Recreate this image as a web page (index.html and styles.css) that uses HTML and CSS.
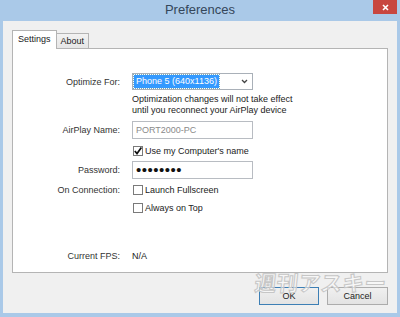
FILE: index.html
```html
<!DOCTYPE html>
<html>
<head>
<meta charset="utf-8">
<link rel="stylesheet" href="styles.css">
</head>
<body>
<div class="window">
  <div class="titlebar">
    <span class="title">Preferences</span>
    <span class="close"><svg width="7" height="7" viewBox="0 0 7 7"><path d="M1 1L6 6M6 1L1 6" stroke="#fff" stroke-width="1.6"/></svg></span>
  </div>
  <div class="client">
    <div class="tabs">
      <div class="tab active">Settings</div>
      <div class="tab">About</div>
    </div>
    <div class="panel">
      <div class="row r1">
        <span class="lbl">Optimize For:</span>
        <div class="select"><span class="sel-text">Phone 5 (640x1136)</span><svg class="chev" width="7" height="5" viewBox="0 0 7 5"><path d="M1 1L3.5 3.5L6 1" fill="none" stroke="#444" stroke-width="1.3"/></svg></div>
      </div>
      <div class="row r2">
        <span class="lbl"></span>
        <p class="help">Optimization changes will not take effect<br>until you reconnect your AirPlay device</p>
      </div>
      <div class="row r3">
        <span class="lbl">AirPlay Name:</span>
        <div class="input"><span class="placeholder">PORT2000-PC</span></div>
      </div>
      <div class="row r4">
        <span class="lbl"></span>
        <span class="check"><span class="box"><svg width="10" height="10" viewBox="0 0 10 10"><path d="M1.8 5L4 7.6L8.4 1.6" fill="none" stroke="#111" stroke-width="1.7"/></svg></span>Use my Computer's name</span>
      </div>
      <div class="row r5">
        <span class="lbl">Password:</span>
        <div class="input"><span class="dots">••••••••</span></div>
      </div>
      <div class="row r6">
        <span class="lbl">On Connection:</span>
        <span class="check"><span class="box"></span>Launch Fullscreen</span>
      </div>
      <div class="row r7">
        <span class="lbl"></span>
        <span class="check"><span class="box"></span>Always on Top</span>
      </div>
      <div class="row r8">
        <span class="lbl">Current FPS:</span>
        <span class="val">N/A</span>
      </div>
    </div>
    <div class="buttons">
      <button class="btn default">OK</button>
      <button class="btn">Cancel</button>
    </div>
  </div>
  <div class="watermark">週刊アスキー</div>
</div>
</body>
</html>
```
FILE: styles.css
```css
* { box-sizing: border-box; }
body {
  margin: 0;
  width: 400px;
  height: 317px;
  overflow: hidden;
  font-family: "Liberation Sans", Arial, sans-serif;
  font-size: 9px;
  color: #222;
}
.window {
  position: relative;
  width: 400px;
  height: 317px;
  background: #aac9e8;
  display: flex;
  flex-direction: column;
}
.titlebar {
  height: 21px;
  display: grid;
  grid-template-columns: 1fr auto 1fr;
}
.title {
  grid-column: 2;
  font-size: 13px;
  line-height: 20px;
  color: #34465a;
}
.close {
  grid-column: 3;
  justify-self: end;
  align-self: start;
  width: 24px;
  height: 14px;
  margin-right: 3px;
  background: #c8463f;
  display: flex;
  align-items: center;
  justify-content: center;
}
.client {
  flex: 1;
  margin: 0 3px 4px;
  background: #f0f0f0;
  padding: 9px 9px 8px;
  display: flex;
  flex-direction: column;
}
.tabs {
  display: flex;
  align-items: flex-end;
  height: 19px;
  margin-bottom: -1px;
  position: relative;
  z-index: 1;
}
.tab {
  height: 15px;
  margin-bottom: 1px;
  padding: 0 4px;
  border: 1px solid #b4b4b4;
  border-bottom: none;
  background: linear-gradient(#f2f2f2, #e6e6e6);
  line-height: 14px;
  color: #1a1a1a;
}
.tab.active {
  height: 19px;
  margin-bottom: 0;
  padding: 0 5px;
  margin-right: -1px;
  background: #fff;
  line-height: 17px;
  position: relative;
  z-index: 2;
}
.panel {
  height: 225px;
  border: 1px solid #b4b4b4;
  background: #fff;
  padding-top: 24px;
  display: flex;
  flex-direction: column;
}
.row {
  display: flex;
  align-items: center;
}
.lbl {
  flex: none;
  width: 107px;
  margin-right: 12px;
  text-align: right;
  color: #333;
}
.r1 { height: 17px; }
.r2 { margin-top: 4px; align-items: flex-start; }
.r3 { margin-top: 5px; height: 18px; }
.r4 { margin-top: 6px; height: 12px; }
.r5 { margin-top: 4px; height: 18px; }
.r6 { margin-top: 5px; height: 12px; }
.r7 { margin-top: 6px; height: 12px; }
.r8 { margin-top: 36px; height: 12px; }
.select {
  width: 121px;
  height: 17px;
  border: 1px solid #a9b0b8;
  display: flex;
  align-items: center;
  padding: 0 4px 0 1px;
  justify-content: space-between;
}
.sel-text {
  background: #3399ff;
  color: #fff;
  padding: 1px 2px;
  line-height: 11px;
  outline: 1px dotted #7ab;
}
.help {
  margin: 0;
  line-height: 11px;
  color: #222;
}
.input {
  width: 121px;
  height: 18px;
  border: 1px solid #b8bcc2;
  background: #fff;
  display: flex;
  align-items: center;
  padding-left: 3px;
}
.placeholder { color: #8a8a8a; }
.dots {
  font-size: 15px;
  letter-spacing: 0.5px;
  color: #111;
  line-height: 12px;
}
.check {
  display: flex;
  align-items: center;
  margin-left: 1px;
  color: #222;
}
.box {
  width: 10px;
  height: 10px;
  border: 1px solid #7a7a7a;
  background: #fff;
  margin-right: 2px;
  display: flex;
  align-items: center;
  justify-content: center;
}
.box svg { flex: none; }
.val { color: #222; }
.buttons {
  margin-top: 14px;
  display: flex;
  justify-content: flex-end;
  gap: 8px;
}
.btn {
  width: 61px;
  height: 18px;
  margin: 0;
  padding: 0;
  font-family: "Liberation Sans", Arial, sans-serif;
  font-size: 9px;
  color: #222;
  border: 1px solid #acacac;
  background: linear-gradient(#f0f0f0, #e3e3e3);
}
.btn.default {
  width: 60px;
  border-color: #3d7fb5;
}
.watermark {
  position: absolute;
  left: 255px;
  top: 270px;
  font-family: "Noto Sans CJK JP", sans-serif;
  font-weight: 700;
  font-size: 21px;
  line-height: 24px;
  letter-spacing: 0.5px;
  color: rgba(255, 255, 255, 0.55);
  -webkit-text-stroke: 1px #c6c6c6;
  transform-origin: left center;
  transform: skewX(-6deg) scaleX(1.02);
  pointer-events: none;
}
```
